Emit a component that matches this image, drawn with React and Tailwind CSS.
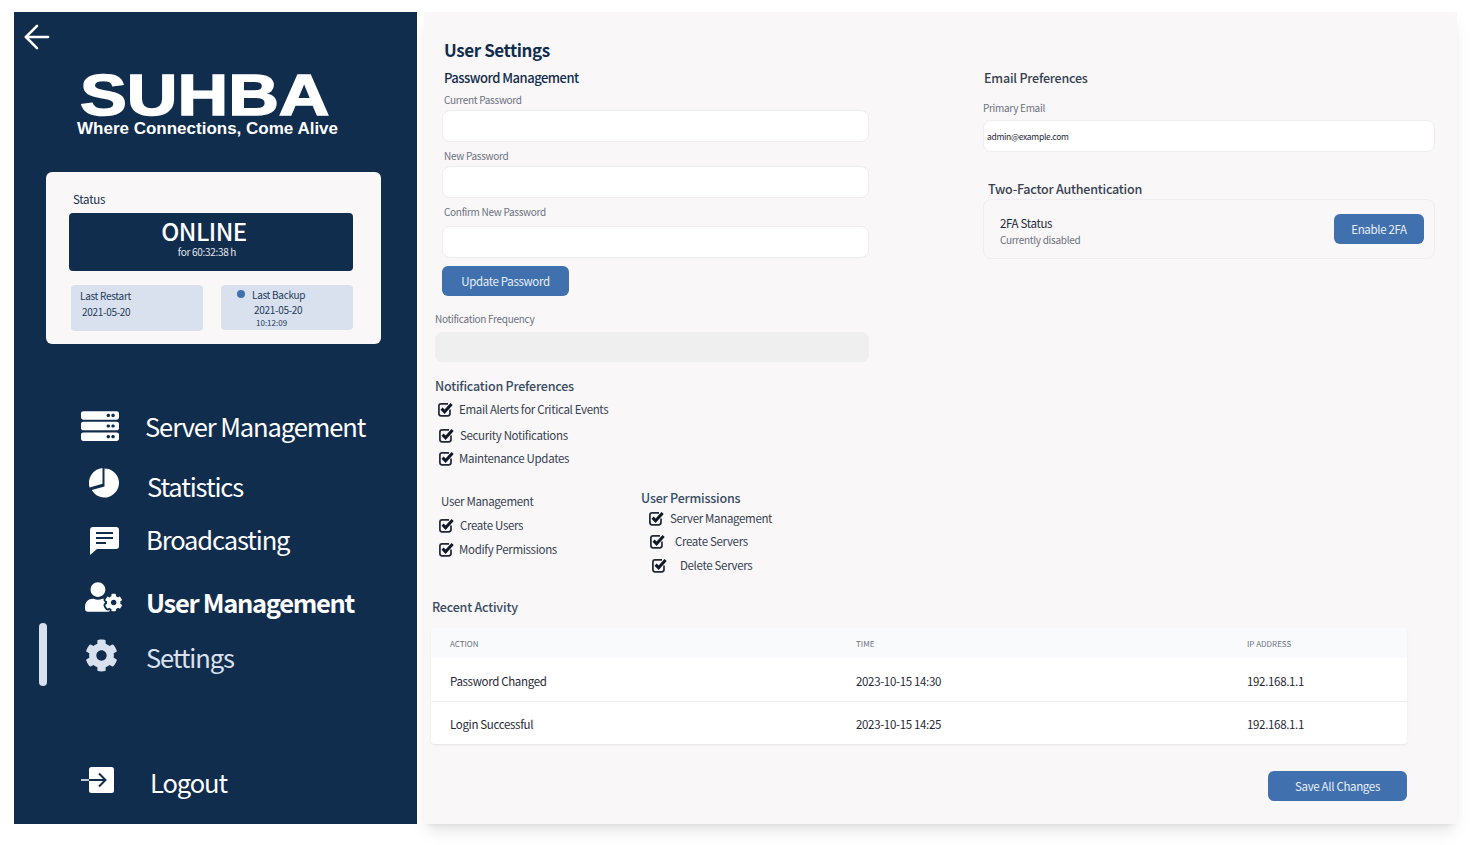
import { ArrowLeft } from "lucide-react";
import { FaServer, FaUserCog, FaCog } from "react-icons/fa";

const font = "font-['Noto_Sans_CJK_SC','Noto_Sans',sans-serif]";

const PieIcon = () => (
    <svg viewBox="0 0 30 30" className="w-[30px] h-[30px]">
        <path d="M15.5 0.5 A14.5 14.5 0 1 1 2.8 22 L15.5 18.5 Z" fill="white" />
        <path d="M13.5 0 L13.5 15.8 L0.6 19.4 A15 15 0 0 1 13.5 0 Z" fill="white" />
    </svg>
);

const BubbleIcon = () => (
    <svg viewBox="0 0 29 28" className="w-[29px] h-[28px]">
        <path d="M3 0 H26 Q29 0 29 3 V19 Q29 22 26 22 H7 L0 28 V3 Q0 0 3 0 Z" fill="white" />
        <path d="M6 6 H23 M6 11 H23 M6 16 H16" stroke="#112d4e" strokeWidth="2" />
    </svg>
);

const LogoutIcon = () => (
    <svg viewBox="0 0 33 26" className="w-[33px] h-[26px]">
        <rect x="8" y="0" width="25" height="26" rx="2.5" fill="white" />
        <path d="M0 13 H8" stroke="white" strokeWidth="1.5" />
        <path d="M8 13 H24 M18 6.5 L24.5 13 L18 19.5" stroke="#112d4e" strokeWidth="2" fill="none" />
    </svg>
);

const Check = () => (
    <svg viewBox="0 0 15 15" className="w-[15px] h-[15px] shrink-0">
        <path d="M12 7.5 V11.5 Q12 13.8 9.7 13.8 H3 Q0.9 13.8 0.9 11.5 V4 Q0.9 1.8 3 1.8 H10" fill="none" stroke="#1f2937" strokeWidth="1.7" />
        <path d="M3.6 6.6 L6.6 9.8 L13.6 2" fill="none" stroke="#111827" strokeWidth="3" />
    </svg>
);

const navItems = [
    { label: "Server Management", icon: <FaServer preserveAspectRatio="none" className="w-[38px] h-[34px]" />, row: "mt-[62px]", slot: "ml-[67px] w-[38px]", text: "ml-[26px] tracking-[-1.1px] text-white" },
    { label: "Statistics", icon: <PieIcon />, row: "mt-[20px]", slot: "ml-[75px] w-[30px] -mt-[6px]", text: "ml-[28px] tracking-[-1.1px] text-white" },
    { label: "Broadcasting", icon: <BubbleIcon />, row: "mt-[13px]", slot: "ml-[76px] w-[29px] mt-[4px]", text: "ml-[27px] tracking-[-1.1px] text-white" },
    { label: "User Management", icon: <FaUserCog className="w-[37px] h-[30px]" />, row: "mt-[23px]", slot: "ml-[71px] w-[37px] -mt-[11px]", text: "ml-[24px] tracking-[-1.3px] text-white font-bold" },
    { label: "Settings", icon: <FaCog className="w-[33px] h-[33px] text-[#dae1ee]" />, row: "mt-[15px]", slot: "ml-[71px] w-[33px] -mt-[4px]", text: "ml-[28px] tracking-[-1.1px] text-[#dae1ee]" },
    { label: "Logout", icon: <LogoutIcon />, row: "mt-[85px]", slot: "ml-[67px] w-[33px] -mt-[4px]", text: "ml-[36px] tracking-[-1.1px] text-white" },
];

const Sidebar = () => (
    <aside className="relative w-[403px] h-[812px] shrink-0 bg-[#112d4e] text-white">
        <div className="ml-[4px] pt-[6px] h-[44px]">
            <ArrowLeft size={38} strokeWidth={1.6} />
        </div>
        <div className="mt-[15px] h-[48px] ml-[66px] flex items-center font-['Liberation_Sans',sans-serif] font-bold text-[58px] leading-none origin-left scale-x-[1.21] [-webkit-text-stroke:1.5px_white]">
            SUHBA
        </div>
        <div className="-mt-[1px] h-[20px] ml-[63px] flex items-center font-['Liberation_Sans',sans-serif] font-bold text-[17px] leading-none whitespace-nowrap">
            Where Connections, Come Alive
        </div>

        <div className={`${font} mt-[34px] ml-[32px] w-[335px] h-[172px] rounded-md bg-[#f9f7f8] text-[#112d4e] pt-[19px] pl-[23px]`}>
            <div className="ml-[4px] h-[18px] flex items-center text-[11.5px] tracking-[-0.25px]">Status</div>
            <div className="mt-[4px] w-[284px] h-[58px] rounded bg-[#112d4e] text-white flex flex-col items-center pr-[14px] pt-[4px]">
                <div className="h-[28px] flex items-center text-[24px] leading-none font-medium tracking-[-0.5px]">ONLINE</div>
                <div className="h-[14px] ml-[6px] flex items-center text-[10px] leading-none tracking-[-0.3px] text-[#e5e7eb]">for 60:32:38 h</div>
            </div>
            <div className="mt-[14px] flex gap-[18px] items-start">
                <div className="ml-[2px] w-[132px] h-[46px] rounded bg-[#dae1ee] pl-[9px] pt-[2px] text-[10px] tracking-[-0.3px] text-[#243b5a]">
                    <div className="h-[16px] flex items-center">Last Restart</div>
                    <div className="h-[16px] flex items-center pl-[2px]">2021-05-20</div>
                </div>
                <div className="w-[132px] h-[45px] rounded bg-[#dae1ee] text-[10px] tracking-[-0.3px] text-[#243b5a]">
                    <div className="h-[18px] flex items-center pl-[16px]">
                        <span className="w-[8px] h-[8px] rounded-full bg-[#4070ae]" />
                        <span className="ml-[7px]">Last Backup</span>
                    </div>
                    <div className="-mt-[1px] h-[15px] flex items-center pl-[33px]">2021-05-20</div>
                    <div className="-mt-px h-[13px] flex items-center pl-[35px] text-[8px] tracking-normal">10:12:09</div>
                </div>
            </div>
        </div>

        <nav className={font}>
            {navItems.map((item) => (
                <div key={item.label} className={`flex items-center h-[40px] ${item.row}`}>
                    <div className={`flex justify-center ${item.slot}`}>{item.icon}</div>
                    <span className={`text-[25.5px] leading-none whitespace-nowrap ${item.text}`}>{item.label}</span>
                </div>
            ))}
        </nav>

        <div className="absolute left-[25px] top-[611px] w-[8px] h-[63px] rounded-full bg-[#dae1ee]" />
    </aside>
);

const Field = ({ className }) => (
    <div className={`h-[32px] rounded-lg bg-white border border-[#eeeef0] ${className}`} />
);

const Label = ({ children, className }) => (
    <div className={`h-[16px] pb-[2px] flex items-center text-[10px] tracking-[-0.3px] text-[#6b7280] ${className}`}>{children}</div>
);

const CheckRow = ({ children, className, gap }) => (
    <div className={`h-[20px] flex items-center text-[11.5px] tracking-[-0.33px] text-[#374151] ${className}`}>
        <Check />
        <span className={`pt-[2px] ${gap}`}>{children}</span>
    </div>
);

const SectionTitle = ({ children, className }) => (
    <h3 className={`h-[20px] flex items-center text-[12.5px] tracking-[-0.2px] font-medium ${className}`}>{children}</h3>
);

const Button = ({ children, className }) => (
    <button className={`h-[30px] pt-[2px] rounded-md bg-[#4070ae] text-[11.5px] tracking-[-0.33px] text-[#e8eef6] ${className}`}>{children}</button>
);

const LeftColumn = () => (
    <div className="ml-[11px] w-[434px]">
        <h1 className="mt-[26px] ml-[9px] h-[24px] flex items-center text-[17px] tracking-[-0.4px] font-bold text-[#112d4e]">User Settings</h1>
        <h2 className="mt-[6px] ml-[9px] h-[20px] flex items-center text-[13px] tracking-[-0.5px] font-medium text-[#112d4e]">Password Management</h2>
        <Label className="mt-[4px] ml-[9px] text-[#2a4365]">Current Password</Label>
        <Field className="mt-[2px] ml-[7px] w-[427px]" />
        <Label className="mt-[6px] ml-[9px]">New Password</Label>
        <Field className="mt-[2px] ml-[7px] w-[427px]" />
        <Label className="mt-[6px] ml-[9px]">Confirm New Password</Label>
        <Field className="mt-[6px] ml-[7px] w-[427px]" />
        <Button className="mt-[8px] ml-[7px] w-[127px]">Update Password</Button>
        <Label className="mt-[15px]">Notification Frequency</Label>
        <div className="mt-[5px] h-[30px] w-[434px] rounded-lg bg-[#efefef]" />
        <SectionTitle className="mt-[14px] text-[#374b63]">Notification Preferences</SectionTitle>
        <CheckRow className="mt-[3px] ml-[3px]" gap="ml-[6px]">Email Alerts for Critical Events</CheckRow>
        <CheckRow className="mt-[6px] ml-[4px]" gap="ml-[6px]">Security Notifications</CheckRow>
        <CheckRow className="mt-[3px] ml-[4px]" gap="ml-[5px]">Maintenance Updates</CheckRow>
    </div>
);

const RightColumn = () => (
    <div className="ml-[114px] w-[452px]">
        <SectionTitle className="mt-[56px] ml-[1px] text-[#374151]">Email Preferences</SectionTitle>
        <Label className="mt-[12px]">Primary Email</Label>
        <div className="mt-[4px] h-[32px] rounded-lg bg-white border border-[#eeeef0] pl-[3px] pt-[1px] flex items-center text-[8.5px] tracking-[-0.3px] text-[#1f2937]">admin@example.com</div>
        <SectionTitle className="mt-[27px] ml-[5px] text-[#374151]">Two-Factor Authentication</SectionTitle>
        <div className="h-[60px] rounded-lg border border-[#eeeef0] pl-[16px] pr-[10px] flex items-center justify-between">
            <div className="pt-[3px]">
                <div className="h-[18px] flex items-center text-[11.5px] tracking-[-0.33px] text-[#1f2937]">2FA Status</div>
                <div className="-mt-px h-[15px] flex items-center text-[10px] tracking-[-0.3px] text-[#6b7280]">Currently disabled</div>
            </div>
            <Button className="w-[90px]">Enable 2FA</Button>
        </div>
    </div>
);

const Permissions = () => (
    <div className="ml-[11px] flex">
        <div className="w-[206px]">
            <div className="mt-[6px] ml-[6px] h-[16px] pt-[2px] flex items-center text-[11.5px] tracking-[-0.33px] text-[#374151]">User Management</div>
            <CheckRow className="mt-[6px] ml-[4px]" gap="ml-[6px]">Create Users</CheckRow>
            <CheckRow className="mt-[4px] ml-[4px]" gap="ml-[5px]">Modify Permissions</CheckRow>
        </div>
        <div>
            <SectionTitle className="mt-px text-[#374b63]">User Permissions</SectionTitle>
            <CheckRow className="ml-[8px]" gap="ml-[6px]">Server Management</CheckRow>
            <CheckRow className="mt-[3px] ml-[9px]" gap="ml-[10px]">Create Servers</CheckRow>
            <CheckRow className="mt-[4px] ml-[11px]" gap="ml-[13px]">Delete Servers</CheckRow>
        </div>
    </div>
);

const activity = [
    { action: "Password Changed", time: "2023-10-15 14:30", ip: "192.168.1.1" },
    { action: "Login Successful", time: "2023-10-15 14:25", ip: "192.168.1.1" },
];

const Activity = () => (
    <div className="ml-[7px] w-[976px]">
        <SectionTitle className="mt-[22px] ml-[1px] text-[#374b63]">Recent Activity</SectionTitle>
        <div className="mt-[11px] rounded shadow-[0_1px_2px_rgba(0,0,0,0.08)] bg-white overflow-hidden">
            <div className="grid grid-cols-[406px_391px_1fr] h-[30px] items-center pl-[19px] pt-[2px] bg-[#f9fafb] text-[8px] uppercase text-[#6b7280]">
                <div>Action</div>
                <div>Time</div>
                <div>IP Address</div>
            </div>
            {activity.map((row, i) => (
                <div key={row.action} className={`grid grid-cols-[406px_391px_1fr] items-center pl-[19px] pt-[4px] text-[11.5px] tracking-[-0.33px] text-[#1f2937] ${i === 0 ? "h-[44px] border-b border-[#eeeef0]" : "h-[42px]"}`}>
                    <div>{row.action}</div>
                    <div>{row.time}</div>
                    <div>{row.ip}</div>
                </div>
            ))}
        </div>
        <div className="mt-[27px] flex justify-end">
            <Button className="w-[139px]">Save All Changes</Button>
        </div>
    </div>
);

export default function App() {
    return (
        <div className={`${font} w-[1482px] h-[845px] overflow-hidden bg-white pt-[12px] pl-[14px] flex items-start gap-[7px]`}>
            <Sidebar />
            <main className="w-[1033px] h-[812px] bg-[#f9f7f8] shadow-lg">
                <div className="flex items-start">
                    <LeftColumn />
                    <RightColumn />
                </div>
                <div className="mt-[19px]">
                    <Permissions />
                </div>
                <Activity />
            </main>
        </div>
    );
}
